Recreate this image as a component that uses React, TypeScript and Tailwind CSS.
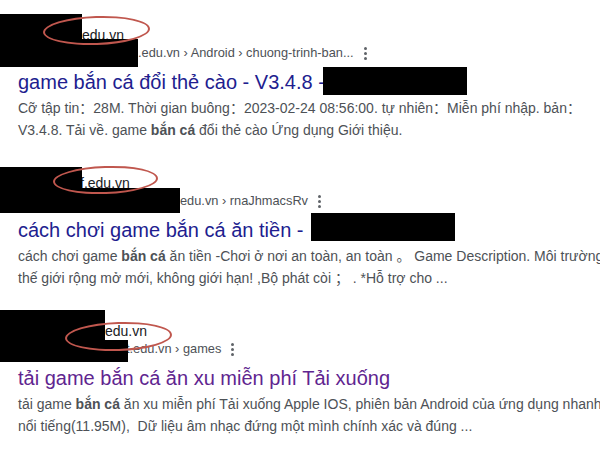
import React from "react";

type Box = { left: number; top: number; w: number; h: number };

type Result = {
  site: string;
  sitePad: number;
  crumbPad: number;
  crumb: string;
  title: string;
  visited?: boolean;
  lines: React.ReactNode[];
  boxes: Box[];
  ring: Box;
};

function Kebab() {
  return (
    <span className="ml-[10px] inline-flex flex-col gap-[2px]">
      <span className="w-[3px] h-[3px] rounded-full bg-[#5f6368]" />
      <span className="w-[3px] h-[3px] rounded-full bg-[#5f6368]" />
      <span className="w-[3px] h-[3px] rounded-full bg-[#5f6368]" />
    </span>
  );
}

const results: Result[] = [
  {
    site: "edu.vn",
    sitePad: 82,
    crumbPad: 138,
    crumb: ".edu.vn › Android › chuong-trinh-ban...",
    title: "game bắn cá đổi thẻ cào - V3.4.8 -",
    lines: [
      <>Cỡ tập tin：28M. Thời gian buông：2023-02-24 08:56:00. tự nhiên：Miễn phí nhập. bản：</>,
      <>V3.4.8. Tải về. game <b>bắn cá</b> đổi thẻ cào Ứng dụng Giới thiệu.</>,
    ],
    boxes: [
      { left: 0, top: 14, w: 82, h: 53 },
      { left: 0, top: 39, w: 138, h: 28 },
      { left: 323, top: 67, w: 144, h: 28 },
    ],
    ring: { left: 43, top: 16, w: 107, h: 29 },
  },
  {
    site: "f.edu.vn",
    sitePad: 80,
    crumbPad: 180,
    crumb: "edu.vn › rnaJhmacsRv",
    title: "cách chơi game bắn cá ăn tiền -",
    lines: [
      <>cách chơi game <b>bắn cá</b> ăn tiền -Chơi ở nơi an toàn, an toàn 。 Game Description. Môi trường</>,
      <>thế giới rộng mở mới, không giới hạn! ,Bộ phát còi ； . *Hỗ trợ cho ...</>,
    ],
    boxes: [
      { left: 0, top: 19, w: 82, h: 46 },
      { left: 0, top: 40, w: 180, h: 25 },
      { left: 311, top: 65, w: 144, h: 28 },
    ],
    ring: { left: 53, top: 18, w: 105, h: 28 },
  },
  {
    site: "edu.vn",
    sitePad: 105,
    crumbPad: 126,
    crumb: "t.edu.vn › games",
    title: "tải game bắn cá ăn xu miễn phí Tải xuống",
    visited: true,
    lines: [
      <>tải game <b>bắn cá</b> ăn xu miễn phí Tải xuống Apple IOS, phiên bản Android của ứng dụng nhanh</>,
      <>nổi tiếng(11.95M),&nbsp; Dữ liệu âm nhạc đứng một mình chính xác và đúng ...</>,
    ],
    boxes: [
      { left: 0, top: 14, w: 105, h: 32 },
      { left: 0, top: 44, w: 128, h: 22 },
    ],
    ring: { left: 65, top: 26, w: 107, h: 29 },
  },
];

export default function App() {
  return (
    <div className="w-[600px] h-[450px] overflow-hidden bg-white font-['Liberation_Sans','Noto_Sans_CJK_SC',sans-serif]">
      {results.map((r, i) => (
        <div key={i} className="relative h-[148px] pt-[26px]">
          <div className="h-[18px] leading-[18px] text-[14px] text-[#202124]" style={{ paddingLeft: r.sitePad }}>
            {r.site}
          </div>
          <div className="h-[18px] leading-[18px] text-[12.8px] text-[#4d5156] flex items-center" style={{ paddingLeft: r.crumbPad }}>
            <span>{r.crumb}</span>
            <Kebab />
          </div>
          <div
            className={`mt-[5px] h-[30px] leading-[30px] pl-[18px] text-[20px] whitespace-nowrap ${r.visited ? "text-[#5f2590]" : "text-[#211d8f]"}`}
          >
            {r.title}
          </div>
          <div className="pl-[18px] text-[14px] leading-[22px] text-[#4d5156] whitespace-nowrap">
            {r.lines.map((l, j) => (
              <div key={j}>{l}</div>
            ))}
          </div>
          {r.boxes.map((b, j) => (
            <div key={j} className="absolute bg-black" style={{ left: b.left, top: b.top, width: b.w, height: b.h }} />
          ))}
          <div
            className="absolute rounded-[50%] border-2 border-[#c0574e] -rotate-2"
            style={{ left: r.ring.left, top: r.ring.top, width: r.ring.w, height: r.ring.h }}
          />
        </div>
      ))}
    </div>
  );
}
